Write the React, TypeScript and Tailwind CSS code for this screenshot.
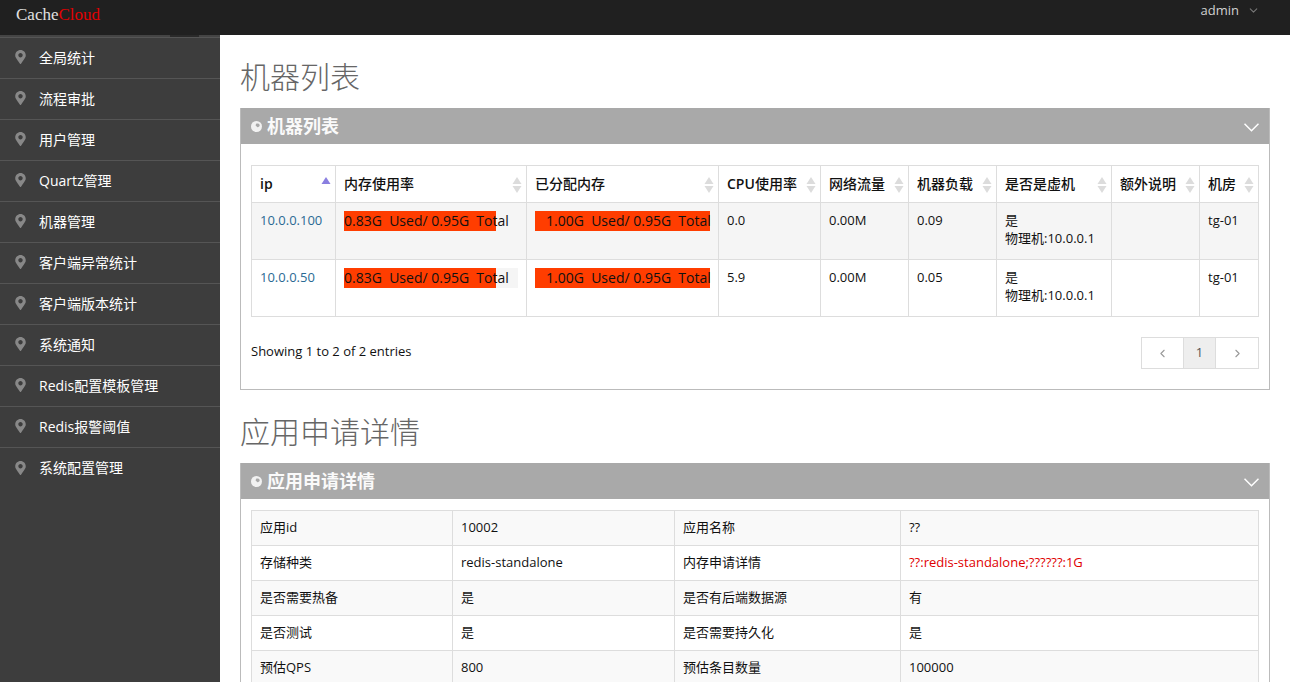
import React from "react";
import { FaMapMarkerAlt } from "react-icons/fa";
import { FiChevronDown, FiChevronLeft, FiChevronRight } from "react-icons/fi";

const menu = ["全局统计", "流程审批", "用户管理", "Quartz管理", "机器管理", "客户端异常统计", "客户端版本统计", "系统通知", "Redis配置模板管理", "Redis报警阈值", "系统配置管理"];

function Sort({ active }: { active?: boolean }) {
  return (
    <svg width="10" height="16" viewBox="0 0 10 16" className="absolute right-[4px] top-[11px]">
      <path d="M5 0 L9.5 7 H0.5 Z" fill={active ? "#8a7fe0" : "#dcdcdc"} />
      {!active && <path d="M5 16 L9.5 9 H0.5 Z" fill="#dcdcdc" />}
    </svg>
  );
}

function PanelHead({ title }: { title: string }) {
  return (
    <div className="flex h-9 items-center bg-[#a9a9a9] pl-[10px] pr-[10px] text-[#fafafa]">
      <svg width="11" height="11" viewBox="0 0 11 11" className="mr-[5px]">
        <circle cx="5.5" cy="5.5" r="5.5" fill="#f2f2f2" />
        <path d="M5.6 2.6 C6.8 2.2 8.2 2.8 8.6 3.8 C8.9 4.8 8.3 5.8 7.4 5.9 C6.8 6.6 6 6.4 5.8 5.6 C5 5.2 4.6 4.6 4.7 3.9 C4.8 3.3 5.1 2.8 5.6 2.6 Z" fill="#a9a9a9" />
      </svg>
      <span className="flex-1 text-[18px] font-semibold leading-none">{title}</span>
      <svg width="15" height="9" viewBox="0 0 15 9" fill="none" stroke="white" strokeWidth="1.5" className="mt-[2px]">
        <path d="M0.5 0.7 L7.5 7.8 L14.5 0.7" />
      </svg>
    </div>
  );
}

function Bar({ text, pct, rest, indent }: { text: string; pct: number; rest?: boolean; indent?: boolean }) {
  return (
    <div className={`relative h-5 w-[174px] whitespace-pre text-[14px] leading-5 ${rest ? "bg-[#f5f5f5]" : ""}`}>
      <div className="absolute left-0 top-0 h-5 bg-[#ff3d00]" style={{ width: pct }} />
      <span className={`relative ${indent ? "pl-[11px]" : ""}`}>{text}</span>
    </div>
  );
}

const rows = [
  { ip: "10.0.0.100", cpu: "0.0", net: "0.00M", load: "0.09", rest: false, bg: "bg-[#f5f5f5]" },
  { ip: "10.0.0.50", cpu: "5.9", net: "0.00M", load: "0.05", rest: true, bg: "bg-white" },
];

const heads: [React.ReactNode, string, boolean?][] = [
  [<span className="font-semibold">ip</span>, "w-[84px]", true],
  ["内存使用率", "w-[191px]"],
  ["已分配内存", "w-[192px]"],
  [<><span className="font-semibold">CPU</span>使用率</>, "w-[102px]"],
  ["网络流量", "w-[88px]"],
  ["机器负载", "w-[88px]"],
  ["是否是虚机", "w-[115px]"],
  ["额外说明", "w-[88px]"],
  ["机房", "w-[59px]"],
];

const detail = [
  ["应用id", "10002", "应用名称", "??"],
  ["存储种类", "redis-standalone", "内存申请详情", "??:redis-standalone;??????:1G"],
  ["是否需要热备", "是", "是否有后端数据源", "有"],
  ["是否测试", "是", "是否需要持久化", "是"],
  ["预估QPS", "800", "预估条目数量", "100000"],
];

const cell = "border border-[#ddd] pl-2 pt-[7px] align-top text-[13px] leading-5";

export default function App() {
  return (
    <div className="h-[682px] w-[1290px] overflow-hidden bg-white font-['Open_Sans','Noto_Sans_CJK_SC',sans-serif] text-[14px] text-[#111]">
      <header className="flex h-[35px] items-start justify-between bg-[#202020]">
        <div className="pl-4 pt-[5px] font-['Liberation_Serif','Noto_Sans_CJK_SC',serif] text-[17px] leading-5 text-[#e0e0e0]">
          Cache<span className="text-[#e00000]">Cloud</span>
        </div>
        <div className="flex items-center pr-[30px] text-[13px] leading-5 text-[#d0d0d0]">
          admin
          <FiChevronDown className="ml-[8px] text-[13px] text-[#777]" />
        </div>
      </header>
      <div className="flex h-[647px]">
        <aside className="relative w-[220px] shrink-0 bg-[#3d3d3d] pt-[3px]">
          <div className="absolute left-0 top-0 h-[3px] w-full border-b border-[#555] bg-[#444]" />
          <div className="absolute left-[170px] top-0 h-[2px] w-[29px] bg-[#2a2a2a]" />
          {menu.map((m, i) => (
            <div key={m} className={`flex h-[41px] items-center pb-[2px] pl-[15px] text-[14px] text-white ${i < menu.length - 1 ? "border-b border-[#555]" : ""}`}>
              <FaMapMarkerAlt className="mr-[13px] h-[14px] w-[11px] text-[#888]" />
              {m}
            </div>
          ))}
        </aside>
        <main className="min-w-0 flex-1 pl-5 pr-5">
          <h1 className="h-[73px] pt-[21px] text-[30px] font-light leading-[42px] text-[#666]">机器列表</h1>
          <section className="h-[282px] border border-t-0 border-[#bbb]">
            <PanelHead title="机器列表" />
            <div className="px-[10px] pt-[21px]">
              <table className="w-[1008px] table-fixed border-collapse">
                <thead>
                  <tr className="h-[37px]">
                    {heads.map(([h, w, a], i) => (
                      <th key={i} className={`${w} relative border border-[#ddd] pb-[2px] pl-2 text-left font-medium`}>
                        {h}
                        <Sort active={a} />
                      </th>
                    ))}
                  </tr>
                </thead>
                <tbody>
                  {rows.map((r) => (
                    <tr key={r.ip} className={`h-[57px] ${r.bg}`}>
                      <td className={`${cell} text-[#2a6a94]`}>{r.ip}</td>
                      <td className="border border-[#ddd] pl-2 pt-2 align-top"><Bar text="0.83G  Used/ 0.95G  Total" pct={152} rest={r.rest} /></td>
                      <td className="border border-[#ddd] pl-2 pt-2 align-top"><Bar text="1.00G  Used/ 0.95G  Total" pct={175} indent /></td>
                      <td className={cell}>{r.cpu}</td>
                      <td className={cell}>{r.net}</td>
                      <td className={cell}>{r.load}</td>
                      <td className="border border-[#ddd] pl-2 pt-2 align-top text-[13px] leading-[18px]">是<br />物理机:10.0.0.1</td>
                      <td className="border border-[#ddd]" />
                      <td className={cell}>tg-01</td>
                    </tr>
                  ))}
                </tbody>
              </table>
              <div className="mt-5 flex items-center justify-between">
                <span className="-mt-[2px] text-[13px]">Showing 1 to 2 of 2 entries</span>
                <div className="flex h-8 border border-[#ddd] text-[13px] text-[#555]">
                  <div className="flex w-[41px] items-center justify-center text-[#999]"><FiChevronLeft /></div>
                  <div className="flex w-[33px] items-center justify-center border-x border-[#ddd] bg-[#eee]">1</div>
                  <div className="flex w-[42px] items-center justify-center text-[#999]"><FiChevronRight /></div>
                </div>
              </div>
            </div>
          </section>
          <h1 className="h-[73px] pt-[21px] text-[30px] font-light leading-[42px] text-[#666]">应用申请详情</h1>
          <section className="border border-t-0 border-[#bbb]">
            <PanelHead title="应用申请详情" />
            <div className="px-[10px] pt-[11px]">
              <table className="w-[1008px] table-fixed border-collapse text-[13px]">
                <tbody>
                  {detail.map((d, i) => (
                    <tr key={d[0]} className={`h-[35px] ${i % 2 === 0 ? "bg-[#f9f9f9]" : "bg-white"}`}>
                      <td className="w-[201px] border border-[#ddd] pl-2">{d[0]}</td>
                      <td className="w-[222px] border border-[#ddd] pl-2">{d[1]}</td>
                      <td className="w-[226px] border border-[#ddd] pl-2">{d[2]}</td>
                      <td className={`border border-[#ddd] pl-2 ${i === 1 ? "text-[#e00000]" : ""}`}>{d[3]}</td>
                    </tr>
                  ))}
                </tbody>
              </table>
            </div>
          </section>
        </main>
      </div>
    </div>
  );
}
